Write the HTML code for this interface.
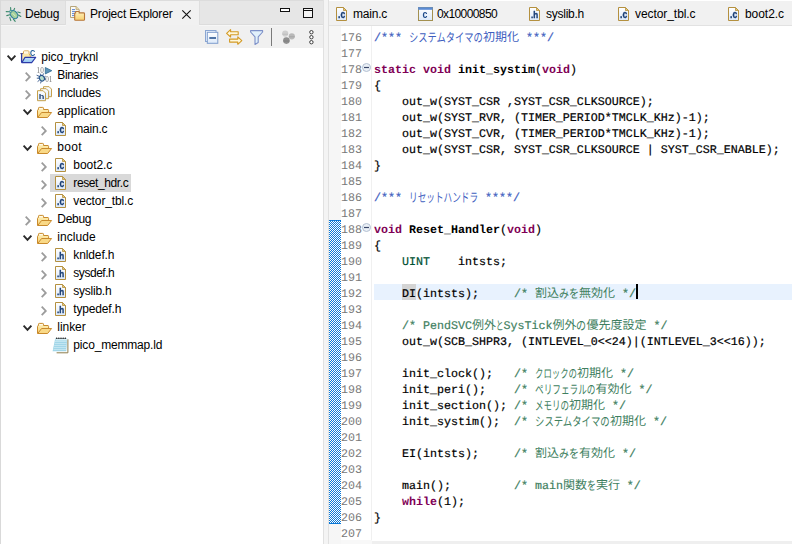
<!DOCTYPE html>
<html lang="ja">
<head>
<meta charset="utf-8">
<title>Eclipse</title>
<style>
html,body{margin:0;padding:0;}
body{width:792px;height:544px;overflow:hidden;background:#f4f4f4;position:relative;font-family:"Liberation Sans","Noto Sans CJK JP",sans-serif;font-size:12px;color:#111;}
.abs{position:absolute;}
svg{position:absolute;overflow:visible;}
.tabtxt{position:absolute;top:6px;font-size:12px;line-height:16px;white-space:nowrap;color:#000;}
.ln{position:absolute;left:341px;width:21px;height:16px;line-height:21px;text-rendering:geometricPrecision;font-family:"Liberation Mono",monospace;font-size:11.67px;color:#787878;white-space:pre;}
.cl{position:absolute;left:374px;height:16px;line-height:21px;text-rendering:geometricPrecision;font-family:"Liberation Mono","Noto Sans CJK JP",monospace;font-size:11.67px;color:#000;white-space:pre;-webkit-text-stroke:0.2px;}
.k{color:#7f0055;font-weight:bold;-webkit-text-stroke:0;}
.b{font-weight:bold;-webkit-text-stroke:0;}
.d{color:#3f5fbf;}
.c{color:#3f7f5f;}
.t{color:#005032;}
.j{font-family:"Noto Sans CJK JP",sans-serif;-webkit-text-stroke:0;display:inline-block;white-space:pre;text-align:left;vertical-align:top;height:16px;line-height:17px;overflow:visible;}
.kj{font-size:12px;}
.kn{font-size:12.5px;display:inline-block;transform-origin:0 50%;vertical-align:top;height:16px;line-height:17px;}
.row{position:absolute;height:18px;line-height:18px;font-size:12px;white-space:nowrap;color:#000;}
</style>
</head>
<body>
<svg width="0" height="0" style="left:0;top:0"><defs><linearGradient id="pg" x1="0" y1="0" x2="0" y2="1"><stop offset="0" stop-color="#ffffff"/><stop offset="1" stop-color="#dce9f9"/></linearGradient><linearGradient id="fy" x1="0" y1="0" x2="0" y2="1"><stop offset="0" stop-color="#fff3c0"/><stop offset="1" stop-color="#f7d070"/></linearGradient><linearGradient id="fb" x1="0" y1="0" x2="0" y2="1"><stop offset="0" stop-color="#c4e2fa"/><stop offset="1" stop-color="#8fc4f0"/></linearGradient></defs></svg>
<div class="abs" style="left:0px;top:0px;width:323px;height:544px;background:#ffffff;"></div>
<div class="abs" style="left:0px;top:0px;width:323px;height:25px;background:#e6e6e6;"></div>
<div class="abs" style="left:66px;top:1px;width:133px;height:25px;background:#f1f1f1;"></div>
<div class="abs" style="left:0px;top:25px;width:323px;height:23px;background:#f0f0f0;"></div>
<div class="abs" style="left:0px;top:25px;width:66px;height:1px;background:#f6f6f6;"></div>
<div class="abs" style="left:199px;top:25px;width:124px;height:1px;background:#f6f6f6;"></div>
<div class="abs" style="left:0px;top:24px;width:66px;height:1px;background:#dcdcdc;"></div>
<div class="abs" style="left:199px;top:24px;width:124px;height:1px;background:#dcdcdc;"></div>
<div class="abs" style="left:0px;top:0px;width:792px;height:1px;background:#dcdcdc;"></div>
<div class="abs" style="left:0px;top:0px;width:1px;height:544px;background:#d9d9d9;"></div>
<div class="abs" style="left:65px;top:1px;width:1px;height:24px;background:#dedede;"></div>
<div class="abs" style="left:199px;top:1px;width:1px;height:24px;background:#dedede;"></div>
<div class="abs" style="left:323px;top:0px;width:1px;height:544px;background:#e1e1e1;"></div>
<div class="abs" style="left:324px;top:0px;width:4px;height:544px;background:#f4f4f4;"></div>
<div class="abs" style="left:328px;top:0px;width:1px;height:544px;background:#e1e1e1;"></div>
<div class="tabtxt" style="left:25px;letter-spacing:-0.25px">Debug</div>
<div class="tabtxt" style="left:90px;letter-spacing:-0.18px">Project Explorer</div>
<svg style="left:5px;top:6px" width="17" height="17" viewBox="0 0 17 17"><g stroke="#3c8a6c" stroke-width="1.1" fill="none" stroke-linecap="round"><path d="M5.6,1.6 L5.8,4.4 M9.6,2.4 L8.6,4.6 M1.2,5.6 L4.4,5.8 M1.8,9.6 L4.8,8.8 M4.8,11.4 L5.8,14.6 M8.4,13.2 L10.2,15.4 M12.8,6 L15.2,6.8 M13.4,9 L15.8,10.4"/></g><ellipse cx="9" cy="8.6" rx="3.3" ry="4.5" transform="rotate(-38 9 8.6)" fill="#a5cf9a" stroke="#2f7f9c" stroke-width="1.1"/><circle cx="5.7" cy="5.4" r="1.1" fill="#bfe3a8" stroke="#2f7f9c" stroke-width="0.8"/><path d="M7.6,7.2 L10.6,10.4" stroke="#d8f0c8" stroke-width="1"/></svg>
<svg style="left:69px;top:5px" width="17" height="17" viewBox="0 0 17 17"><path d="M1.5,1.5 H7 L10.2,4.6 V12.5 H1.5 Z" fill="#fbfbf6" stroke="#b7a57a"/><path d="M7,1.5 V4.6 H10.2" fill="#ead9a6" stroke="#b7a57a" stroke-width="0.8"/><path d="M3,4.6 H6 M3,6.6 H7 M3,8.6 H6 M3,10.6 H6" stroke="#5b86d6" stroke-width="1"/><path d="M5.7,15.2 V8.6 Q5.7,7.9 6.6,7.9 V7.2 Q6.6,6.5 7.4,6.5 H9.4 Q10.2,6.5 10.2,7.2 V7.9 H14.6 Q15.5,7.9 15.5,8.8 V14.4 Q15.5,15.3 14.6,15.3 H6.6 Q5.7,15.3 5.7,14.4 Z" fill="url(#fy)" stroke="#b7763a" stroke-width="1.1"/></svg>
<svg style="left:182px;top:10px" width="9" height="9" viewBox="0 0 9 9"><path d="M0.3,0.3 L8.7,8.7 M8.7,0.3 L0.3,8.7" stroke="#111" stroke-width="1.1"/></svg>
<svg style="left:280px;top:8px" width="10" height="4" viewBox="0 0 10 4"><rect x="0.5" y="0.5" width="9" height="3" fill="#fff" stroke="#111"/></svg>
<svg style="left:303px;top:8px" width="10" height="10" viewBox="0 0 10 10"><rect x="0.5" y="0.5" width="9" height="9" fill="#f4f4f4" stroke="#111"/><path d="M0.5,2.5 H9.5" stroke="#111"/></svg>
<svg style="left:205px;top:30px" width="14" height="14" viewBox="0 0 14 14"><rect x="0.5" y="0.5" width="10.5" height="11" fill="#eaf2fb" stroke="#8aa6d2"/><rect x="2.3" y="2.3" width="10.5" height="11" fill="url(#pg)" stroke="#7f9dcc"/><path d="M4.3,8 H11" stroke="#1c4a8a" stroke-width="1.5"/></svg>
<svg style="left:226px;top:29px" width="17" height="16" viewBox="0 0 17 16"><path d="M0.6,4.3 L4.6,0.6 V2.8 H12.2 V5.8 H4.6 V8 Z" fill="#fff8dc" stroke="#d39a25" stroke-width="1.1" stroke-linejoin="round"/><path d="M15.8,11.6 L11.8,7.9 V10.1 H3.6 V13.1 H11.8 V15.3 Z" fill="#fff8dc" stroke="#d39a25" stroke-width="1.1" stroke-linejoin="round"/></svg>
<svg style="left:250px;top:30px" width="14" height="15" viewBox="0 0 14 15"><path d="M0.6,0.6 H12.6 V2 L8.2,6.8 V12.6 L5,14.4 V6.8 L0.6,2 Z" fill="#e1f0fb" stroke="#7d90c8" stroke-width="1.1" stroke-linejoin="round"/></svg>
<div class="abs" style="left:271px;top:28px;width:1px;height:18px;background:#7a7a7a;"></div>
<svg style="left:281px;top:30px" width="16" height="15" viewBox="0 0 16 15"><circle cx="4.2" cy="3.6" r="3.1" fill="#cfcfcf"/><path d="M1.4,4.2 H7" stroke="#bdbdbd"/><circle cx="10.8" cy="6.3" r="3.1" fill="#b9b9b9"/><path d="M8,6.8 H13.6" stroke="#a6a6a6"/><circle cx="5.4" cy="10.6" r="3.3" fill="#8f8f8f"/><path d="M2.4,11 H8.4" stroke="#7c7c7c"/></svg>
<svg style="left:308px;top:29px" width="7" height="16" viewBox="0 0 7 16"><g fill="#fff" stroke="#3a3a3a" stroke-width="1"><circle cx="3.4" cy="3.2" r="1.7"/><circle cx="3.4" cy="8.2" r="1.7"/><circle cx="3.4" cy="13.2" r="1.7"/></g></svg>
<div class="abs" style="left:329px;top:0px;width:463px;height:544px;background:#ffffff;"></div>
<div class="abs" style="left:329px;top:1px;width:463px;height:24px;background:#f1f1f1;"></div>
<div class="abs" style="left:329px;top:25px;width:463px;height:1px;background:#e2e2e2;"></div>
<div class="abs" style="left:329px;top:26px;width:12px;height:518px;background:#f6f6f6;"></div>
<div class="abs" style="left:371px;top:26px;width:1px;height:514px;background:#f0f0f0;"></div>
<div class="abs" style="left:341px;top:540px;width:31px;height:4px;background:#f8f8f8;"></div>
<div class="abs" style="left:372px;top:541px;width:420px;height:3px;background:#efefef;"></div>
<svg style="left:333px;top:6px;will-change:transform" width="16" height="16" viewBox="0 0 16 16"><path d="M3.5,1.5 H10.5 L13.5,4.5 V14.5 H3.5 Z" fill="url(#pg)" stroke="#b4903f"/><path d="M10.5,1.5 V4.5 H13.5 Z" fill="#e8c978" stroke="#b4903f" stroke-width="0.8"/><text transform="translate(8.6,12.1) scale(0.75,1)" text-anchor="middle" font-family="Liberation Sans,sans-serif" font-weight="bold" font-size="11.5" fill="#1a3f76" stroke="#1a3f76" stroke-width="0.35">.c</text></svg>
<div class="tabtxt" style="left:353px;letter-spacing:-0.2px">main.c</div>
<svg style="left:418px;top:7px;will-change:transform" width="15" height="14" viewBox="0 0 15 14"><rect x="0.5" y="0.5" width="14" height="13" fill="url(#pg)" stroke="#a3904f"/><rect x="0.5" y="0.5" width="14" height="2" fill="#5b8bd4" stroke="#5b8bd4" stroke-width="0.6"/><text text-anchor="middle" font-family="Liberation Sans,sans-serif" font-weight="bold" font-size="11" fill="#1c4a8a" transform="translate(6.9,10.9) scale(0.8,1)">c</text></svg>
<div class="tabtxt" style="left:437px;letter-spacing:-0.6px">0x10000850</div>
<svg style="left:526px;top:6px;will-change:transform" width="16" height="16" viewBox="0 0 16 16"><path d="M3.5,1.5 H10.5 L13.5,4.5 V14.5 H3.5 Z" fill="url(#pg)" stroke="#b4903f"/><path d="M10.5,1.5 V4.5 H13.5 Z" fill="#e8c978" stroke="#b4903f" stroke-width="0.8"/><text transform="translate(8.6,12.1) scale(0.85,1)" text-anchor="middle" font-family="Liberation Sans,sans-serif" font-weight="bold" font-size="9.5" fill="#1a3f76" stroke="#1a3f76" stroke-width="0.35">.h</text></svg>
<div class="tabtxt" style="left:546px;letter-spacing:-0.25px">syslib.h</div>
<svg style="left:615px;top:6px;will-change:transform" width="16" height="16" viewBox="0 0 16 16"><path d="M3.5,1.5 H10.5 L13.5,4.5 V14.5 H3.5 Z" fill="url(#pg)" stroke="#b4903f"/><path d="M10.5,1.5 V4.5 H13.5 Z" fill="#e8c978" stroke="#b4903f" stroke-width="0.8"/><text transform="translate(8.6,12.1) scale(0.75,1)" text-anchor="middle" font-family="Liberation Sans,sans-serif" font-weight="bold" font-size="11.5" fill="#1a3f76" stroke="#1a3f76" stroke-width="0.35">.c</text></svg>
<div class="tabtxt" style="left:635px;letter-spacing:-0.07px">vector_tbl.c</div>
<svg style="left:725px;top:6px;will-change:transform" width="16" height="16" viewBox="0 0 16 16"><path d="M3.5,1.5 H10.5 L13.5,4.5 V14.5 H3.5 Z" fill="url(#pg)" stroke="#b4903f"/><path d="M10.5,1.5 V4.5 H13.5 Z" fill="#e8c978" stroke="#b4903f" stroke-width="0.8"/><text transform="translate(8.6,12.1) scale(0.75,1)" text-anchor="middle" font-family="Liberation Sans,sans-serif" font-weight="bold" font-size="11.5" fill="#1a3f76" stroke="#1a3f76" stroke-width="0.35">.c</text></svg>
<div class="tabtxt" style="left:745px;letter-spacing:-0.05px">boot2.c</div>
<div class="abs" style="left:374px;top:284px;width:418px;height:16px;background:#e8f2fe;"></div>
<div class="abs" style="left:329px;top:220px;width:12px;height:304px;background-color:#fff;background-image:linear-gradient(45deg,#0a78d7 25%,transparent 25%,transparent 75%,#0a78d7 75%),linear-gradient(45deg,#0a78d7 25%,transparent 25%,transparent 75%,#0a78d7 75%);background-size:2px 2px;background-position:0 0,1px 1px;border-top:1px solid #0a78d7;border-bottom:1px solid #0a78d7;box-sizing:border-box;"></div>
<div class="abs" style="left:402px;top:284px;width:14px;height:16px;background:#d4d4d4;"></div>
<div class="abs" style="left:636px;top:284px;width:2px;height:15px;background:#000;"></div>
<svg style="left:362px;top:63px" width="9" height="9" viewBox="0 0 9 9"><circle cx="4.5" cy="4.5" r="4" fill="#eaf0f7" stroke="#b4c0d2"/><path d="M2,4.5 H7" stroke="#39476a" stroke-width="1.2"/></svg>
<svg style="left:362px;top:223px" width="9" height="9" viewBox="0 0 9 9"><circle cx="4.5" cy="4.5" r="4" fill="#eaf0f7" stroke="#b4c0d2"/><path d="M2,4.5 H7" stroke="#39476a" stroke-width="1.2"/></svg>
<div class="row" style="left:41.3px;top:48px;letter-spacing:-0.04px">pico_tryknl</div>
<svg style="left:7.1px;top:55px" width="9" height="6" viewBox="0 0 9 6"><path d="M0.6,0.7 L4.5,4.8 L8.4,0.7" fill="none" stroke="#2b2b2b" stroke-width="1.9"/></svg>
<svg style="left:20px;top:49px;will-change:transform" width="16" height="16" viewBox="0 0 16 16"><path d="M2,4.6 H9.6 L11,7.6 V8.4 H5 L2,13 Z" fill="#fde7a6"/><path d="M3.5,4.6 V2.7 Q3.5,1.9 4.3,1.9 H8.2 Q9,1.9 9,2.7 V4.4 L10.9,7.8" fill="none" stroke="#dba84e" stroke-width="1"/><path d="M4.6,3.2 H7.9" stroke="#fff6dc" stroke-width="1.2"/><path d="M0.3,4.6 H3.2" stroke="#6d5468" stroke-width="1"/><path d="M1.6,4.4 V13.6" stroke="#2c3aa8" stroke-width="1.3" fill="none"/><path d="M1.8,13.6 L5,8.4 H15.7 L11.7,13.6 Z" fill="url(#fb)" stroke="#2c3aa8" stroke-width="1.1" stroke-linejoin="round"/><text transform="translate(12.7,6.9) scale(0.84,1)" text-anchor="middle" font-family="Liberation Sans,sans-serif" font-weight="bold" font-size="8.6" fill="#1a5a94">C</text></svg>
<div class="row" style="left:57.3px;top:66px;letter-spacing:-0.36px">Binaries</div>
<svg style="left:24.8px;top:72px" width="6" height="10" viewBox="0 0 6 10"><path d="M0.7,0.6 L4.8,4.9 L0.7,9.2" fill="none" stroke="#9c9c9c" stroke-width="1.8"/></svg>
<svg style="left:36px;top:67px;will-change:transform" width="16" height="16" viewBox="0 0 16 16"><text x="0.6" y="5.8" font-family="Liberation Serif,serif" font-size="7.2" fill="#777777">10</text><text x="9.2" y="14.6" font-family="Liberation Serif,serif" font-size="7.2" fill="#777777">01</text><path d="M9.3,0.5 L15.8,3.7 L9.3,6.9 Z" fill="#5c93b8" stroke="#2f6a90" stroke-width="0.8"/><g stroke="#24487e" stroke-width="0.85" fill="none"><path d="M4.2,6.6 L5.2,8.6 M7.4,6.4 L6.9,8.4 M0.6,8.2 L3.4,9.4 M0.8,11.2 L3.2,11.2 M1.6,14.6 L3.6,13 M4.6,16.4 L5.2,14.2 M9.6,9.2 L8.2,10.2 M10,12.2 L8.6,12"/></g><ellipse cx="5.9" cy="11.2" rx="2.4" ry="2.9" transform="rotate(-35 5.9 11.2)" fill="#b5dccb" stroke="#24508a" stroke-width="1.1"/></svg>
<div class="row" style="left:57.3px;top:84px;letter-spacing:-0.15px">Includes</div>
<svg style="left:24.8px;top:90px" width="6" height="10" viewBox="0 0 6 10"><path d="M0.7,0.6 L4.8,4.9 L0.7,9.2" fill="none" stroke="#9c9c9c" stroke-width="1.8"/></svg>
<svg style="left:36px;top:85px;will-change:transform" width="16" height="16" viewBox="0 0 16 16"><path d="M7.5,1.7 h5.6 l2.4,2.4 v7.6 h-8 z" fill="url(#pg)" stroke="#c6a04a"/><path d="M4.6,3.7 h5.6 l2.4,2.4 v7.6 h-8 z" fill="url(#pg)" stroke="#c6a04a"/><path d="M1.5,5.7 h5.6 l2.4,2.4 v7.6 h-8 z" fill="url(#pg)" stroke="#c6a04a"/><text transform="translate(5.6,14.2) scale(1.15,1)" text-anchor="middle" font-family="Liberation Sans,sans-serif" font-weight="bold" font-size="8" fill="#1f3f6e">h</text></svg>
<div class="row" style="left:57.3px;top:102px;letter-spacing:0.05px">application</div>
<svg style="left:23.1px;top:109px" width="9" height="6" viewBox="0 0 9 6"><path d="M0.6,0.7 L4.5,4.8 L8.4,0.7" fill="none" stroke="#2b2b2b" stroke-width="1.9"/></svg>
<svg style="left:36px;top:103px" width="16" height="16" viewBox="0 0 16 16"><path d="M1.5,14.5 V7.4 Q1.5,6.6 2.5,6.5 V5.2 Q2.5,4.4 3.3,4.4 H6.7 Q7.5,4.4 7.5,5.2 V6.5 H12 Q12.6,6.6 12.6,7.4 V9.4" fill="url(#fy)" stroke="#c98a2c"/><path d="M3.4,5.6 H6.6" stroke="#fffaf0" stroke-width="1.2"/><path d="M1.7,14.5 L5.6,9.5 H15.6 L11.6,14.5 Z" fill="#f9d987" stroke="#c98a2c" stroke-linejoin="round"/></svg>
<div class="row" style="left:73.3px;top:120px;letter-spacing:-0.22px">main.c</div>
<svg style="left:40.8px;top:126px" width="6" height="10" viewBox="0 0 6 10"><path d="M0.7,0.6 L4.8,4.9 L0.7,9.2" fill="none" stroke="#9c9c9c" stroke-width="1.8"/></svg>
<svg style="left:52px;top:121px;will-change:transform" width="16" height="16" viewBox="0 0 16 16"><path d="M3.5,1.5 H10.5 L13.5,4.5 V14.5 H3.5 Z" fill="url(#pg)" stroke="#b4903f"/><path d="M10.5,1.5 V4.5 H13.5 Z" fill="#e8c978" stroke="#b4903f" stroke-width="0.8"/><text transform="translate(8.6,12.1) scale(0.75,1)" text-anchor="middle" font-family="Liberation Sans,sans-serif" font-weight="bold" font-size="11.5" fill="#1a3f76" stroke="#1a3f76" stroke-width="0.35">.c</text></svg>
<div class="row" style="left:57.3px;top:138px;letter-spacing:0.28px">boot</div>
<svg style="left:23.1px;top:145px" width="9" height="6" viewBox="0 0 9 6"><path d="M0.6,0.7 L4.5,4.8 L8.4,0.7" fill="none" stroke="#2b2b2b" stroke-width="1.9"/></svg>
<svg style="left:36px;top:139px" width="16" height="16" viewBox="0 0 16 16"><path d="M1.5,14.5 V7.4 Q1.5,6.6 2.5,6.5 V5.2 Q2.5,4.4 3.3,4.4 H6.7 Q7.5,4.4 7.5,5.2 V6.5 H12 Q12.6,6.6 12.6,7.4 V9.4" fill="url(#fy)" stroke="#c98a2c"/><path d="M3.4,5.6 H6.6" stroke="#fffaf0" stroke-width="1.2"/><path d="M1.7,14.5 L5.6,9.5 H15.6 L11.6,14.5 Z" fill="#f9d987" stroke="#c98a2c" stroke-linejoin="round"/></svg>
<div class="row" style="left:73.3px;top:156px;letter-spacing:-0.06px">boot2.c</div>
<svg style="left:40.8px;top:162px" width="6" height="10" viewBox="0 0 6 10"><path d="M0.7,0.6 L4.8,4.9 L0.7,9.2" fill="none" stroke="#9c9c9c" stroke-width="1.8"/></svg>
<svg style="left:52px;top:157px;will-change:transform" width="16" height="16" viewBox="0 0 16 16"><path d="M3.5,1.5 H10.5 L13.5,4.5 V14.5 H3.5 Z" fill="url(#pg)" stroke="#b4903f"/><path d="M10.5,1.5 V4.5 H13.5 Z" fill="#e8c978" stroke="#b4903f" stroke-width="0.8"/><text transform="translate(8.6,12.1) scale(0.75,1)" text-anchor="middle" font-family="Liberation Sans,sans-serif" font-weight="bold" font-size="11.5" fill="#1a3f76" stroke="#1a3f76" stroke-width="0.35">.c</text></svg>
<div class="abs" style="left:50px;top:174px;width:81px;height:18px;background:#d9d9d9;"></div>
<div class="row" style="left:73.3px;top:174px;letter-spacing:-0.40px">reset_hdr.c</div>
<svg style="left:40.8px;top:180px" width="6" height="10" viewBox="0 0 6 10"><path d="M0.7,0.6 L4.8,4.9 L0.7,9.2" fill="none" stroke="#9c9c9c" stroke-width="1.8"/></svg>
<svg style="left:52px;top:175px;will-change:transform" width="16" height="16" viewBox="0 0 16 16"><path d="M3.5,1.5 H10.5 L13.5,4.5 V14.5 H3.5 Z" fill="url(#pg)" stroke="#b4903f"/><path d="M10.5,1.5 V4.5 H13.5 Z" fill="#e8c978" stroke="#b4903f" stroke-width="0.8"/><text transform="translate(8.6,12.1) scale(0.75,1)" text-anchor="middle" font-family="Liberation Sans,sans-serif" font-weight="bold" font-size="11.5" fill="#1a3f76" stroke="#1a3f76" stroke-width="0.35">.c</text></svg>
<div class="row" style="left:73.3px;top:192px;letter-spacing:-0.12px">vector_tbl.c</div>
<svg style="left:40.8px;top:198px" width="6" height="10" viewBox="0 0 6 10"><path d="M0.7,0.6 L4.8,4.9 L0.7,9.2" fill="none" stroke="#9c9c9c" stroke-width="1.8"/></svg>
<svg style="left:52px;top:193px;will-change:transform" width="16" height="16" viewBox="0 0 16 16"><path d="M3.5,1.5 H10.5 L13.5,4.5 V14.5 H3.5 Z" fill="url(#pg)" stroke="#b4903f"/><path d="M10.5,1.5 V4.5 H13.5 Z" fill="#e8c978" stroke="#b4903f" stroke-width="0.8"/><text transform="translate(8.6,12.1) scale(0.75,1)" text-anchor="middle" font-family="Liberation Sans,sans-serif" font-weight="bold" font-size="11.5" fill="#1a3f76" stroke="#1a3f76" stroke-width="0.35">.c</text></svg>
<div class="row" style="left:57.3px;top:210px;letter-spacing:-0.28px">Debug</div>
<svg style="left:24.8px;top:216px" width="6" height="10" viewBox="0 0 6 10"><path d="M0.7,0.6 L4.8,4.9 L0.7,9.2" fill="none" stroke="#9c9c9c" stroke-width="1.8"/></svg>
<svg style="left:36px;top:211px" width="16" height="16" viewBox="0 0 16 16"><path d="M1.5,14.5 V7.4 Q1.5,6.6 2.5,6.5 V5.2 Q2.5,4.4 3.3,4.4 H6.7 Q7.5,4.4 7.5,5.2 V6.5 H12 Q12.6,6.6 12.6,7.4 V9.4" fill="url(#fy)" stroke="#c98a2c"/><path d="M3.4,5.6 H6.6" stroke="#fffaf0" stroke-width="1.2"/><path d="M1.7,14.5 L5.6,9.5 H15.6 L11.6,14.5 Z" fill="#f9d987" stroke="#c98a2c" stroke-linejoin="round"/></svg>
<div class="row" style="left:57.3px;top:228px;letter-spacing:0.07px">include</div>
<svg style="left:23.1px;top:235px" width="9" height="6" viewBox="0 0 9 6"><path d="M0.6,0.7 L4.5,4.8 L8.4,0.7" fill="none" stroke="#2b2b2b" stroke-width="1.9"/></svg>
<svg style="left:36px;top:229px" width="16" height="16" viewBox="0 0 16 16"><path d="M1.5,14.5 V7.4 Q1.5,6.6 2.5,6.5 V5.2 Q2.5,4.4 3.3,4.4 H6.7 Q7.5,4.4 7.5,5.2 V6.5 H12 Q12.6,6.6 12.6,7.4 V9.4" fill="url(#fy)" stroke="#c98a2c"/><path d="M3.4,5.6 H6.6" stroke="#fffaf0" stroke-width="1.2"/><path d="M1.7,14.5 L5.6,9.5 H15.6 L11.6,14.5 Z" fill="#f9d987" stroke="#c98a2c" stroke-linejoin="round"/></svg>
<div class="row" style="left:73.3px;top:246px;letter-spacing:-0.12px">knldef.h</div>
<svg style="left:40.8px;top:252px" width="6" height="10" viewBox="0 0 6 10"><path d="M0.7,0.6 L4.8,4.9 L0.7,9.2" fill="none" stroke="#9c9c9c" stroke-width="1.8"/></svg>
<svg style="left:52px;top:247px;will-change:transform" width="16" height="16" viewBox="0 0 16 16"><path d="M3.5,1.5 H10.5 L13.5,4.5 V14.5 H3.5 Z" fill="url(#pg)" stroke="#b4903f"/><path d="M10.5,1.5 V4.5 H13.5 Z" fill="#e8c978" stroke="#b4903f" stroke-width="0.8"/><text transform="translate(8.6,12.1) scale(0.85,1)" text-anchor="middle" font-family="Liberation Sans,sans-serif" font-weight="bold" font-size="9.5" fill="#1a3f76" stroke="#1a3f76" stroke-width="0.35">.h</text></svg>
<div class="row" style="left:73.3px;top:264px;letter-spacing:-0.46px">sysdef.h</div>
<svg style="left:40.8px;top:270px" width="6" height="10" viewBox="0 0 6 10"><path d="M0.7,0.6 L4.8,4.9 L0.7,9.2" fill="none" stroke="#9c9c9c" stroke-width="1.8"/></svg>
<svg style="left:52px;top:265px;will-change:transform" width="16" height="16" viewBox="0 0 16 16"><path d="M3.5,1.5 H10.5 L13.5,4.5 V14.5 H3.5 Z" fill="url(#pg)" stroke="#b4903f"/><path d="M10.5,1.5 V4.5 H13.5 Z" fill="#e8c978" stroke="#b4903f" stroke-width="0.8"/><text transform="translate(8.6,12.1) scale(0.85,1)" text-anchor="middle" font-family="Liberation Sans,sans-serif" font-weight="bold" font-size="9.5" fill="#1a3f76" stroke="#1a3f76" stroke-width="0.35">.h</text></svg>
<div class="row" style="left:73.3px;top:282px;letter-spacing:-0.25px">syslib.h</div>
<svg style="left:40.8px;top:288px" width="6" height="10" viewBox="0 0 6 10"><path d="M0.7,0.6 L4.8,4.9 L0.7,9.2" fill="none" stroke="#9c9c9c" stroke-width="1.8"/></svg>
<svg style="left:52px;top:283px;will-change:transform" width="16" height="16" viewBox="0 0 16 16"><path d="M3.5,1.5 H10.5 L13.5,4.5 V14.5 H3.5 Z" fill="url(#pg)" stroke="#b4903f"/><path d="M10.5,1.5 V4.5 H13.5 Z" fill="#e8c978" stroke="#b4903f" stroke-width="0.8"/><text transform="translate(8.6,12.1) scale(0.85,1)" text-anchor="middle" font-family="Liberation Sans,sans-serif" font-weight="bold" font-size="9.5" fill="#1a3f76" stroke="#1a3f76" stroke-width="0.35">.h</text></svg>
<div class="row" style="left:73.3px;top:300px;letter-spacing:-0.16px">typedef.h</div>
<svg style="left:40.8px;top:306px" width="6" height="10" viewBox="0 0 6 10"><path d="M0.7,0.6 L4.8,4.9 L0.7,9.2" fill="none" stroke="#9c9c9c" stroke-width="1.8"/></svg>
<svg style="left:52px;top:301px;will-change:transform" width="16" height="16" viewBox="0 0 16 16"><path d="M3.5,1.5 H10.5 L13.5,4.5 V14.5 H3.5 Z" fill="url(#pg)" stroke="#b4903f"/><path d="M10.5,1.5 V4.5 H13.5 Z" fill="#e8c978" stroke="#b4903f" stroke-width="0.8"/><text transform="translate(8.6,12.1) scale(0.85,1)" text-anchor="middle" font-family="Liberation Sans,sans-serif" font-weight="bold" font-size="9.5" fill="#1a3f76" stroke="#1a3f76" stroke-width="0.35">.h</text></svg>
<div class="row" style="left:57.3px;top:318px;letter-spacing:-0.05px">linker</div>
<svg style="left:23.1px;top:325px" width="9" height="6" viewBox="0 0 9 6"><path d="M0.6,0.7 L4.5,4.8 L8.4,0.7" fill="none" stroke="#2b2b2b" stroke-width="1.9"/></svg>
<svg style="left:36px;top:319px" width="16" height="16" viewBox="0 0 16 16"><path d="M1.5,14.5 V7.4 Q1.5,6.6 2.5,6.5 V5.2 Q2.5,4.4 3.3,4.4 H6.7 Q7.5,4.4 7.5,5.2 V6.5 H12 Q12.6,6.6 12.6,7.4 V9.4" fill="url(#fy)" stroke="#c98a2c"/><path d="M3.4,5.6 H6.6" stroke="#fffaf0" stroke-width="1.2"/><path d="M1.7,14.5 L5.6,9.5 H15.6 L11.6,14.5 Z" fill="#f9d987" stroke="#c98a2c" stroke-linejoin="round"/></svg>
<div class="row" style="left:73.3px;top:336px;letter-spacing:-0.17px">pico_memmap.ld</div>
<svg style="left:52px;top:337px" width="17" height="18" viewBox="0 0 17 18"><path d="M6.4,3 H15.6 V15.4 H4.6 Z" fill="#ffffff"/><path d="M15.9,2.2 V15.8 H4.6" fill="none" stroke="#8d7c4c" stroke-width="1"/><path d="M3.2,1.6 H15.2 L14.2,14.2 H0.6 Z" fill="#9fd5e7"/><path d="M3,4.6 H14.8 M2.6,6.6 H14.6 M2.2,8.6 H14.5 M1.8,10.6 H14.4 M1.4,12.6 H14.3" stroke="#c9e9f3" stroke-width="0.9"/><path d="M3.6,2.8 H15" stroke="#e4f4fa" stroke-width="1.2"/><g fill="#2a2a2a"><path d="M4.2,0.6 l1,2 h-2 z M6.3,0.6 l1,2 h-2 z M8.4,0.6 l1,2 h-2 z M10.5,0.6 l1,2 h-2 z M12.6,0.6 l1,2 h-2 z" transform="translate(0.6,-0.7)"/></g></svg>
<div class="ln" style="top:28px;">176</div>
<div class="cl" style="top:28px;"><span class="d">/*** <span class="j" style="width:110px"><span class="kn" style="width:74.00px;transform:scaleX(0.7400)">システムタイマの</span><span class="kj">初期化</span></span> ***/</span></div>
<div class="ln" style="top:44px;">177</div>
<div class="ln" style="top:60px;">178</div>
<div class="cl" style="top:60px;"><span class="k">static</span> <span class="k">void</span> <span class="b">init_systim</span>(<span class="k">void</span>)</div>
<div class="ln" style="top:76px;">179</div>
<div class="cl" style="top:76px;">{</div>
<div class="ln" style="top:92px;">180</div>
<div class="cl" style="top:92px;">    out_w(SYST_CSR ,SYST_CSR_CLKSOURCE);</div>
<div class="ln" style="top:108px;">181</div>
<div class="cl" style="top:108px;">    out_w(SYST_RVR, (TIMER_PERIOD*TMCLK_KHz)-1);</div>
<div class="ln" style="top:124px;">182</div>
<div class="cl" style="top:124px;">    out_w(SYST_CVR, (TIMER_PERIOD*TMCLK_KHz)-1);</div>
<div class="ln" style="top:140px;">183</div>
<div class="cl" style="top:140px;">    out_w(SYST_CSR, SYST_CSR_CLKSOURCE | SYST_CSR_ENABLE);</div>
<div class="ln" style="top:156px;">184</div>
<div class="cl" style="top:156px;">}</div>
<div class="ln" style="top:172px;">185</div>
<div class="ln" style="top:188px;">186</div>
<div class="cl" style="top:188px;"><span class="d">/*** <span class="j" style="width:69px"><span class="kn" style="width:69.00px;transform:scaleX(0.6900)">リセットハンドラ</span></span> ****/</span></div>
<div class="ln" style="top:204px;">187</div>
<div class="ln" style="top:220px;">188</div>
<div class="cl" style="top:220px;"><span class="k">void</span> <span class="b">Reset_Handler</span>(<span class="k">void</span>)</div>
<div class="ln" style="top:236px;">189</div>
<div class="cl" style="top:236px;">{</div>
<div class="ln" style="top:252px;">190</div>
<div class="cl" style="top:252px;">    <span class="t">UINT</span>    intsts;</div>
<div class="ln" style="top:268px;">191</div>
<div class="ln" style="top:284px;">192</div>
<div class="cl" style="top:284px;">    DI(intsts);     <span class="c">/* <span class="j" style="width:80px"><span class="kj">割込</span><span class="kn" style="width:20.00px;transform:scaleX(0.8000)">みを</span><span class="kj">無効化</span></span> */</span></div>
<div class="ln" style="top:300px;">193</div>
<div class="ln" style="top:316px;">194</div>
<div class="cl" style="top:316px;">    <span class="c">/* PendSVC<span class="j" style="width:31.5px"><span class="kj">例外</span><span class="kn" style="width:7.50px;transform:scaleX(0.6000)">と</span></span>SysTick<span class="j" style="width:94px"><span class="kj">例外</span><span class="kn" style="width:10.00px;transform:scaleX(0.8000)">の</span><span class="kj">優先度設定</span></span> */</span></div>
<div class="ln" style="top:332px;">195</div>
<div class="cl" style="top:332px;">    out_w(SCB_SHPR3, (INTLEVEL_0&lt;&lt;24)|(INTLEVEL_3&lt;&lt;16));</div>
<div class="ln" style="top:348px;">196</div>
<div class="ln" style="top:364px;">197</div>
<div class="cl" style="top:364px;">    init_clock();   <span class="c">/* <span class="j" style="width:78px"><span class="kn" style="width:42.00px;transform:scaleX(0.6720)">クロックの</span><span class="kj">初期化</span></span> */</span></div>
<div class="ln" style="top:380px;">198</div>
<div class="cl" style="top:380px;">    init_peri();    <span class="c">/* <span class="j" style="width:96.5px"><span class="kn" style="width:60.50px;transform:scaleX(0.6914)">ペリフェラルの</span><span class="kj">有効化</span></span> */</span></div>
<div class="ln" style="top:396px;">199</div>
<div class="cl" style="top:396px;">    init_section(); <span class="c">/* <span class="j" style="width:70px"><span class="kn" style="width:34.00px;transform:scaleX(0.6800)">メモリの</span><span class="kj">初期化</span></span> */</span></div>
<div class="ln" style="top:412px;">200</div>
<div class="cl" style="top:412px;">    init_systim();  <span class="c">/* <span class="j" style="width:111px"><span class="kn" style="width:75.00px;transform:scaleX(0.7500)">システムタイマの</span><span class="kj">初期化</span></span> */</span></div>
<div class="ln" style="top:428px;">201</div>
<div class="ln" style="top:444px;">202</div>
<div class="cl" style="top:444px;">    EI(intsts);     <span class="c">/* <span class="j" style="width:80px"><span class="kj">割込</span><span class="kn" style="width:20.00px;transform:scaleX(0.8000)">みを</span><span class="kj">有効化</span></span> */</span></div>
<div class="ln" style="top:460px;">203</div>
<div class="ln" style="top:476px;">204</div>
<div class="cl" style="top:476px;">    main();         <span class="c">/* main<span class="j" style="width:57px"><span class="kj">関数</span><span class="kn" style="width:9.00px;transform:scaleX(0.7200)">を</span><span class="kj">実行</span></span> */</span></div>
<div class="ln" style="top:492px;">205</div>
<div class="cl" style="top:492px;">    <span class="k">while</span>(1);</div>
<div class="ln" style="top:508px;">206</div>
<div class="cl" style="top:508px;">}</div>
<div class="ln" style="top:524px;">207</div>
</body>
</html>
